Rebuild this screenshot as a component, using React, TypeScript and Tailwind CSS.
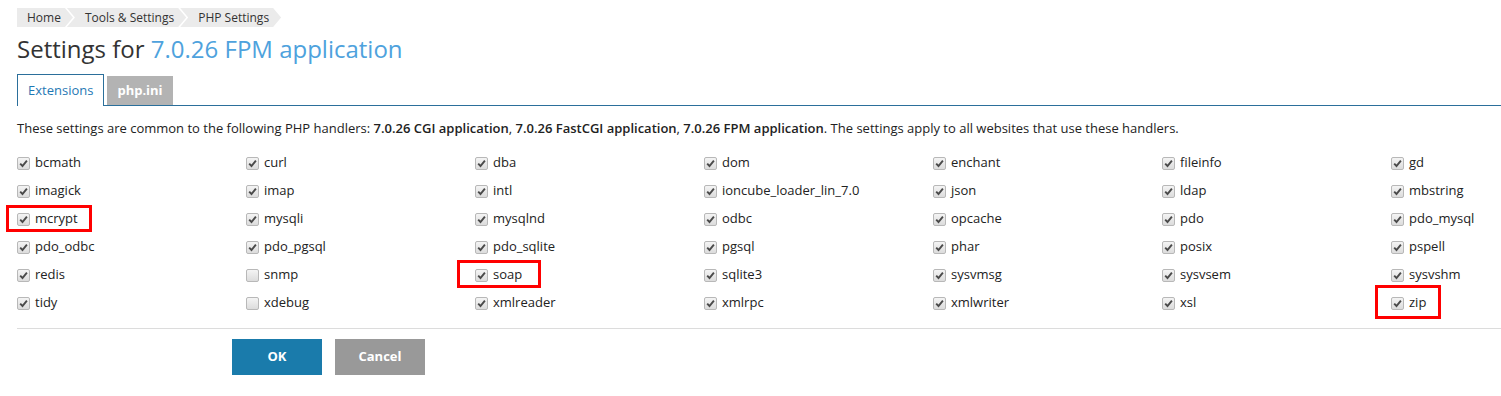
import React from 'react';

type Ext = { name: string; checked?: boolean; mark?: string };

const rows: Ext[][] = [
  [{ name: 'bcmath' }, { name: 'curl' }, { name: 'dba' }, { name: 'dom' }, { name: 'enchant' }, { name: 'fileinfo' }, { name: 'gd' }],
  [{ name: 'imagick' }, { name: 'imap' }, { name: 'intl' }, { name: 'ioncube_loader_lin_7.0' }, { name: 'json' }, { name: 'ldap' }, { name: 'mbstring' }],
  [{ name: 'mcrypt', mark: 'left-[-11px] top-0 w-[86px] h-[27px]' }, { name: 'mysqli' }, { name: 'mysqlnd' }, { name: 'odbc' }, { name: 'opcache' }, { name: 'pdo' }, { name: 'pdo_mysql' }],
  [{ name: 'pdo_odbc' }, { name: 'pdo_pgsql' }, { name: 'pdo_sqlite' }, { name: 'pgsql' }, { name: 'phar' }, { name: 'posix' }, { name: 'pspell' }],
  [{ name: 'redis' }, { name: 'snmp', checked: false }, { name: 'soap', mark: 'left-[-18px] top-[-1px] w-[84px] h-[28px]' }, { name: 'sqlite3' }, { name: 'sysvmsg' }, { name: 'sysvsem' }, { name: 'sysvshm' }],
  [{ name: 'tidy' }, { name: 'xdebug', checked: false }, { name: 'xmlreader' }, { name: 'xmlrpc' }, { name: 'xmlwriter' }, { name: 'xsl' }, { name: 'zip', mark: 'left-[-16px] top-[-4px] w-[66px] h-[34px]' }],
];

const Checkbox: React.FC<{ checked: boolean }> = ({ checked }) => (
  <span className="flex items-center justify-center w-[13px] h-[13px] rounded-[2px] border border-[#b8b8b8] bg-gradient-to-b from-[#f4f4f4] to-[#dcdcdc]">
    {checked && (
      <svg width="9" height="9" viewBox="0 0 9 9">
        <path d="M1.2 4.6 L3.5 7 L7.9 1.6" fill="none" stroke="#4a4a4a" strokeWidth="1.9" />
      </svg>
    )}
  </span>
);

const crumbs = ['Home', 'Tools & Settings', 'PHP Settings'];

export default function App() {
  return (
    <div className="w-[1501px] h-[396px] overflow-hidden bg-white text-[#333] font-['Open_Sans',sans-serif] pl-[17px] pt-[8px]">
      {/* breadcrumbs */}
      <div className="flex h-[19px] text-[12px] leading-[19px] text-[#333]">
        {crumbs.map((c, i) => (
          <div
            key={c}
            className={`bg-[#ebebeb] pr-[12px] ${i === 0 ? 'pl-[10px]' : 'pl-[18px] -ml-[6px]'}`}
            style={{
              clipPath:
                i === 0
                  ? 'polygon(0 0, calc(100% - 8px) 0, 100% 50%, calc(100% - 8px) 100%, 0 100%)'
                  : 'polygon(0 0, calc(100% - 8px) 0, 100% 50%, calc(100% - 8px) 100%, 0 100%, 8px 50%)',
            }}
          >
            {c}
          </div>
        ))}
      </div>

      {/* title */}
      <h1 className="mt-[6px] text-[24px] leading-[32px] font-normal text-[#333]">
        Settings for <span className="text-[#4ea2dd]">7.0.26 FPM application</span>
      </h1>

      {/* tabs */}
      <div className="mt-[9px] flex items-end h-[32px] border-b border-[#2b6f9b]">
        <div className="h-[32px] px-[10px] border border-b-0 border-[#2b6f9b] bg-white text-[13px] leading-[31px] text-[#1f78b4] -mb-px pb-px">
          Extensions
        </div>
        <div className="ml-[3px] h-[29px] px-[10px] bg-[#b3b3b3] text-white font-bold text-[13px] leading-[29px]">
          php.ini
        </div>
      </div>

      {/* description */}
      <p className="mt-[13px] text-[13px] leading-[18px] text-[#222]">
        These settings are common to the following PHP handlers: <b className="font-semibold">7.0.26 CGI application</b>,{' '}
        <b className="font-semibold">7.0.26 FastCGI application</b>, <b className="font-semibold">7.0.26 FPM application</b>. The
        settings apply to all websites that use these handlers.
      </p>

      {/* extensions grid */}
      <div className="mt-[12px] grid grid-cols-[repeat(6,229px)_1fr]">
        {rows.flat().map((e) => (
          <label key={e.name} className="relative flex items-center gap-[5px] h-[28px] text-[13px] text-[#222]">
            <Checkbox checked={e.checked !== false} />
            <span>{e.name}</span>
            {e.mark && <span className={`absolute border-[3px] border-[#f00] ${e.mark}`} />}
          </label>
        ))}
      </div>

      {/* footer */}
      <div className="mt-[11px] border-t border-[#dcdcdc]" />
      <div className="mt-[10px] flex gap-[13px] pl-[215px]">
        <button className="w-[90px] h-[36px] bg-[#1a7bab] text-white font-bold text-[13px]">OK</button>
        <button className="w-[90px] h-[36px] bg-[#999] text-white font-bold text-[13px]">Cancel</button>
      </div>
    </div>
  );
}
